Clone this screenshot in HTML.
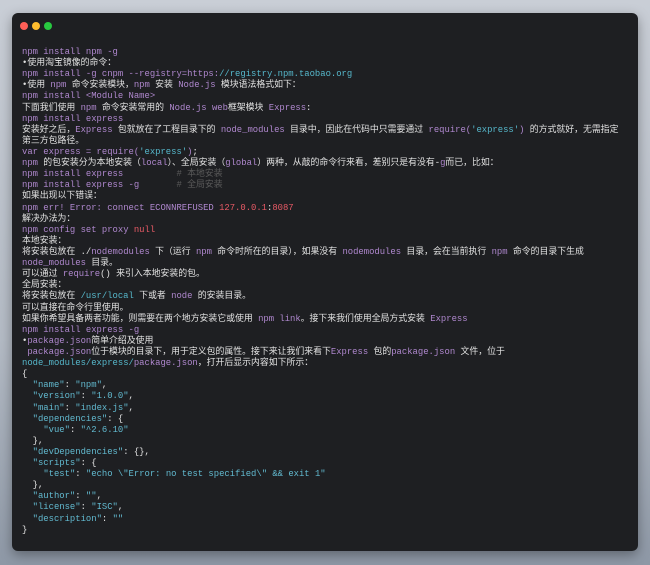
<!DOCTYPE html>
<html><head><meta charset="utf-8"><style>
html,body{margin:0;padding:0;width:650px;height:565px;overflow:hidden;background:linear-gradient(180deg,#c9ced6 0%,#b4bbc5 60%,#8e98a6 100%);}
.win{position:absolute;left:12px;top:13px;width:626px;height:538px;background:#1e1f22;border-radius:6px;box-shadow:0 4px 12px rgba(0,0,0,.35);}
.dot{position:absolute;top:9px;width:8px;height:8px;border-radius:50%;}
.t{position:absolute;left:10px;top:34px;font-family:"Liberation Mono","Noto Sans CJK SC",monospace;font-size:8.9px;color:#e2e2e2;}
.t div{height:11.12px;line-height:11.12px;white-space:pre;}
.p{color:#b088cf}.c{color:#56b8cc}.r{color:#e85a66}.g{color:#5a5a5a}.k{color:#62bad0}
</style></head><body>
<div class="win">
<div class="dot" style="left:8px;background:#fe5f57"></div>
<div class="dot" style="left:20px;background:#febc2e"></div>
<div class="dot" style="left:32px;background:#28c840"></div>
<div class="t">
<div><span class="p">npm install npm -g</span></div>
<div>•使用淘宝镜像的命令：</div>
<div><span class="p">npm install -g cnpm --registry=https:</span><span class="c">//registry.npm.taobao.org</span></div>
<div>•使用 <span class="p">npm</span> 命令安装模块，<span class="p">npm</span> 安装 <span class="p">Node.js</span> 模块语法格式如下：</div>
<div><span class="p">npm install &lt;Module Name&gt;</span></div>
<div>下面我们使用 <span class="p">npm</span> 命令安装常用的 <span class="p">Node.js web</span>框架模块 <span class="p">Express</span>:</div>
<div><span class="p">npm install express</span></div>
<div>安装好之后，<span class="p">Express</span> 包就放在了工程目录下的 <span class="p">node_modules</span> 目录中，因此在代码中只需要通过 <span class="p">require(</span><span class="c">'express'</span><span class="p">)</span> 的方式就好，无需指定</div>
<div>第三方包路径。</div>
<div><span class="p">var express = require(</span><span class="c">'express'</span><span class="p">)</span>;</div>
<div><span class="p">npm</span> 的包安装分为本地安装（<span class="p">local</span>）、全局安装（<span class="p">global</span>）两种，从敲的命令行来看，差别只是有没有-<span class="p">g</span>而已，比如：</div>
<div><span class="p">npm install express</span>          <span class="g"># 本地安装</span></div>
<div><span class="p">npm install express -g</span>       <span class="g"># 全局安装</span></div>
<div>如果出现以下错误：</div>
<div><span class="p">npm err! Error: connect ECONNREFUSED</span> <span class="r">127.0.0.1</span>:<span class="r">8087</span></div>
<div>解决办法为：</div>
<div><span class="p">npm config set proxy</span> <span class="r">null</span></div>
<div>本地安装：</div>
<div>将安装包放在 ./<span class="p">nodemodules</span> 下（运行 <span class="p">npm</span> 命令时所在的目录），如果没有 <span class="p">nodemodules</span> 目录，会在当前执行 <span class="p">npm</span> 命令的目录下生成</div>
<div><span class="p">node_modules</span> 目录。</div>
<div>可以通过 <span class="p">require</span>() 来引入本地安装的包。</div>
<div>全局安装：</div>
<div>将安装包放在 <span class="c">/usr/local</span> 下或者 <span class="p">node</span> 的安装目录。</div>
<div>可以直接在命令行里使用。</div>
<div>如果你希望具备两者功能，则需要在两个地方安装它或使用 <span class="p">npm link</span>。接下来我们使用全局方式安装 <span class="p">Express</span></div>
<div><span class="p">npm install express -g</span></div>
<div>•<span class="p">package.json</span>简单介绍及使用</div>
<div> <span class="p">package.json</span>位于模块的目录下，用于定义包的属性。接下来让我们来看下<span class="p">Express</span> 包的<span class="p">package.json</span> 文件，位于</div>
<div><span class="c">node_modules/express/</span><span class="p">package.json</span>，打开后显示内容如下所示：</div>
<div>{</div>
<div>  <span class="k">"name"</span>: <span class="k">"npm"</span>,</div>
<div>  <span class="k">"version"</span>: <span class="k">"1.0.0"</span>,</div>
<div>  <span class="k">"main"</span>: <span class="k">"index.js"</span>,</div>
<div>  <span class="k">"dependencies"</span>: {</div>
<div>    <span class="k">"vue"</span>: <span class="k">"^2.6.10"</span></div>
<div>  },</div>
<div>  <span class="k">"devDependencies"</span>: {},</div>
<div>  <span class="k">"scripts"</span>: {</div>
<div>    <span class="k">"test"</span>: <span class="k">"echo \"Error: no test specified\" &amp;&amp; exit 1"</span></div>
<div>  },</div>
<div>  <span class="k">"author"</span>: <span class="k">""</span>,</div>
<div>  <span class="k">"license"</span>: <span class="k">"ISC"</span>,</div>
<div>  <span class="k">"description"</span>: <span class="k">""</span></div>
<div>}</div>
</div>
</div>
</body></html>
